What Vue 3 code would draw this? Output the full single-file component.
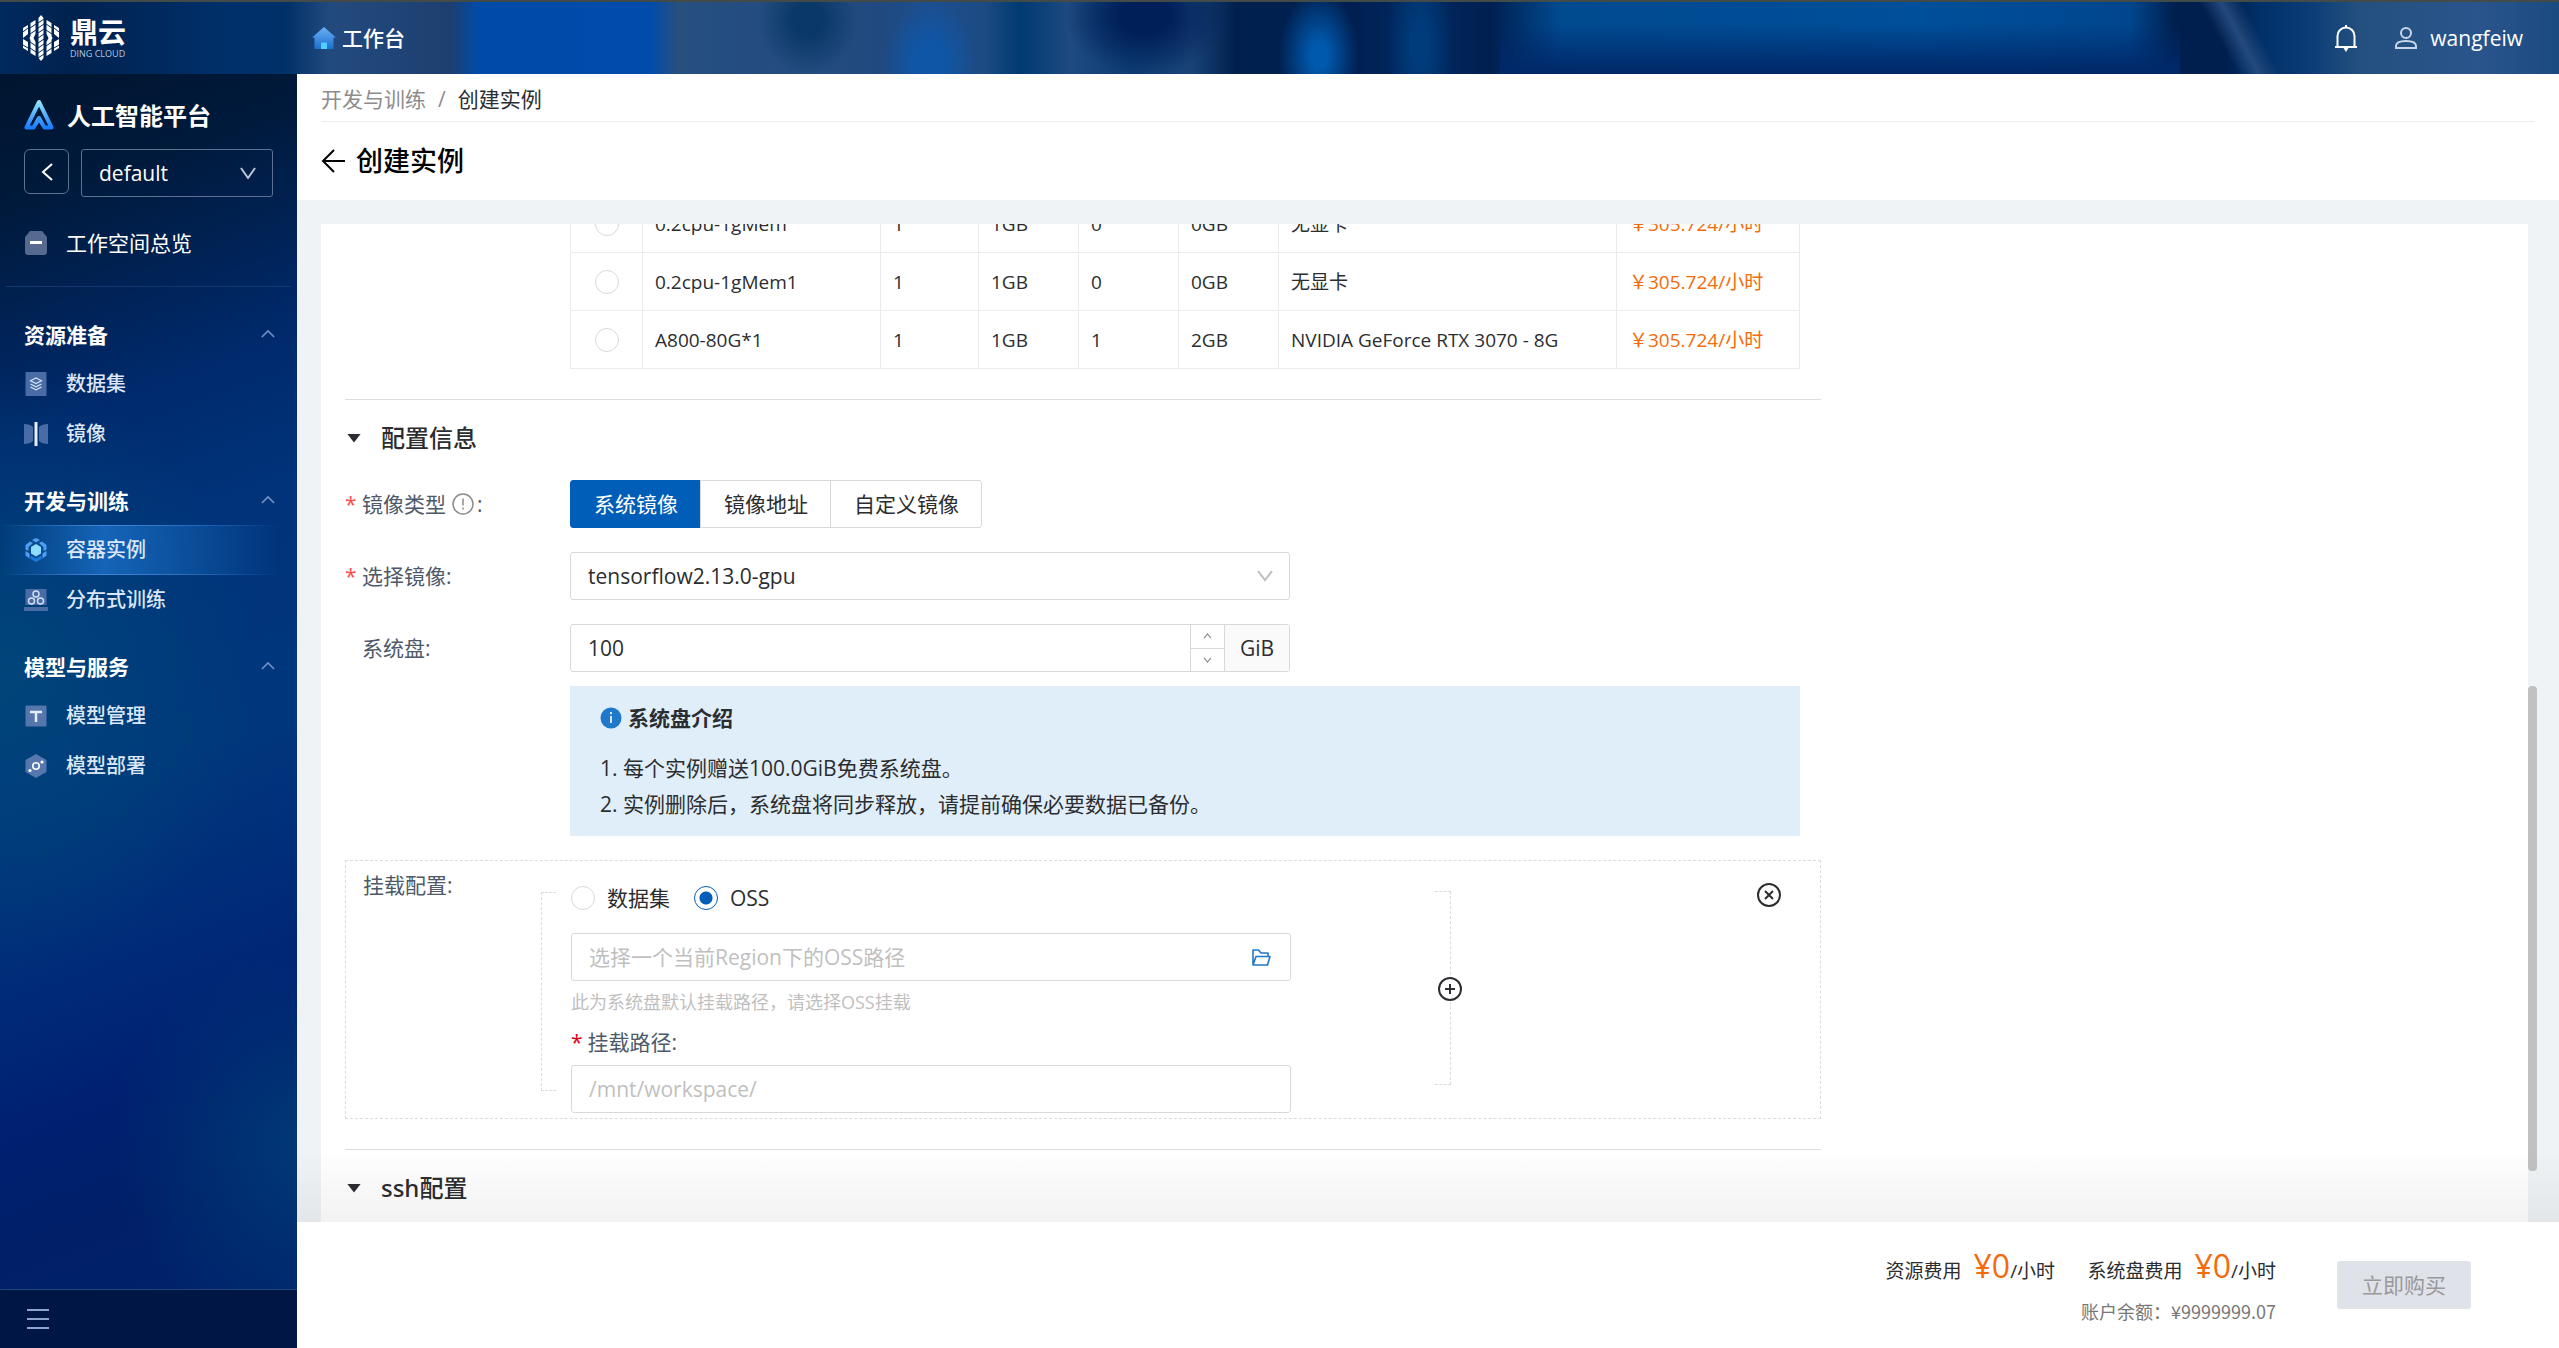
<template>
  <div class="app">
    <header class="topbar">
      <a class="brand" href="#">
        <svg class="brand-mark" viewBox="0 0 36 46" width="36" height="46" aria-hidden="true">
          <g fill="#fff">
            <path d="M0 13l5-3v9l-5 4zM0 24l5 3v9l-5-3zM31 10l5 3v10l-5-4zM31 27l5-3v9l-5 3z" />
            <path d="M7.500 8l5-3v14l-2 4 2 4v14l-5-3v-13l-1-2 1-2zM23.500 5l5 3v13l1 2-1 2v13l-5 3v-14l2-4-2-4z" />
            <path d="M15.500 3L18 0l2.500 3v40L18 46l-2.500-3z" />
          </g>
          <path
            d="M0 17l5-4M0 30l5 3M7 13l6-4M7 19l6-4M7 27l6 4M7 33l6 4M15 8l6-4M15 13l6-4M15 18l6-4M15 23l6-4M15 28l6-4M15 33l6-4M15 38l6-4M15 43l6-4M23 9l6 4M23 15l6 4M23 31l6-4M23 37l6-4M31 13l5 4M31 33l5-3"
            stroke="#06265a" stroke-width="1" fill="none"
          />
        </svg>
        <span class="brand-text">
          <span class="brand-name">鼎云</span>
          <span class="brand-sub">DING CLOUD</span>
        </span>
      </a>

      <a class="workbench" href="#">
        <svg viewBox="0 0 24 22" width="24" height="22" aria-hidden="true">
          <defs>
            <linearGradient id="home-fill" x1="0" y1="0" x2="0" y2="1">
              <stop offset="0" stop-color="#6bb0f5" />
              <stop offset="1" stop-color="#1a6fd0" />
            </linearGradient>
          </defs>
          <path d="M12 0l12 10.500h-2.500V22h-19V10.500H0z" fill="url(#home-fill)" />
          <path d="M9 22v-5.500a1 1 0 0 1 1-1h4a1 1 0 0 1 1 1V22z" fill="#4fd0ff" />
        </svg>
        工作台
      </a>

      <div class="topbar-right">
        <button class="icon-btn" type="button" aria-label="通知">
          <svg viewBox="0 0 24 28" width="24" height="28" fill="none" stroke="#fff" stroke-width="2">
            <path d="M12 1v3M3.500 22V12a8.500 8.500 0 0 1 17 0v10M1 23h22" />
            <path d="M9.500 24h5L12 28z" fill="#fff" stroke="none" />
          </svg>
        </button>
        <a class="user" href="#">
          <svg viewBox="0 0 24 24" width="24" height="24" fill="none" stroke="#c9d6ea" stroke-width="2">
            <circle cx="12" cy="7" r="5" />
            <path d="M2 22v-2c0-4 4-5 10-5s10 1 10 5v2z" />
          </svg>
          wangfeiw
        </a>
      </div>
    </header>

    <div class="body">
      <aside class="sidebar">
        <div class="platform">
          <svg viewBox="0 0 30 31" width="30" height="31" aria-hidden="true">
            <defs>
              <linearGradient id="logo-fill" x1="0" y1="0" x2="0" y2="1">
                <stop offset="0" stop-color="#8fe3ff" />
                <stop offset="1" stop-color="#1a7dff" />
              </linearGradient>
            </defs>
            <path
              d="M15 3L2.500 28.500H9.500L15 19L20.500 28.500H27.500L15 3z" fill="none"
              stroke="url(#logo-fill)" stroke-width="4" stroke-linejoin="round"
            />
            <path d="M15 17l4 11.500L15 23.500L11 28.500z" fill="#2e93ff" />
          </svg>
          <span>人工智能平台</span>
        </div>

        <div class="workspace">
          <button class="back-btn" type="button" aria-label="返回">
            <svg viewBox="0 0 12 18" width="12" height="18" fill="none" stroke="#fff" stroke-width="2">
              <path d="M11 1L2 9l9 8" />
            </svg>
          </button>
          <div class="select-wrap ws-select">
            <select v-model="workspace" aria-label="工作空间">
              <option value="default">default</option>
            </select>
            <svg class="chevron" viewBox="0 0 16 12" width="16" height="12" fill="none" stroke="#b9c6da" stroke-width="2">
              <path d="M1 1l7 10 7-10" />
            </svg>
          </div>
        </div>

        <a class="overview" href="#">
          <svg viewBox="0 0 24 24" width="24" height="24" aria-hidden="true">
            <path d="M6 0h12l5 6v15a3 3 0 0 1-3 3H4a3 3 0 0 1-3-3V6z" fill="#566a8f" />
            <rect x="6" y="10" width="12" height="3" fill="#fff" />
          </svg>
          工作空间总览
        </a>

        <nav class="nav">
          <section v-for="group in menu" :key="group.title" class="nav-group">
            <button class="nav-title" type="button">
              {{ group.title }}
              <svg viewBox="0 0 16 10" width="14" height="9" fill="none" stroke="#6f8fc4" stroke-width="2">
                <path d="M1 9l7-7 7 7" />
              </svg>
            </button>
            <a
              v-for="item in group.items"
              :key="item.label"
              class="nav-item"
              :class="{ active: item.label === activeItem }"
              href="#"
            >
              <svg viewBox="0 0 24 24" width="24" height="24" aria-hidden="true">
                <g v-if="item.icon === 'dataset'">
                  <rect x="1.500" width="21" height="24" rx="1" fill="#4a6ca6" />
                  <path d="M12 6l5.500 2.800L12 11.600 6.500 8.800zM6.500 12l5.500 2.800 5.500-2.800M6.500 15l5.500 2.800 5.500-2.800" fill="none" stroke="#d5e2f5" stroke-width="1.200" />
                </g>
                <g v-else-if="item.icon === 'image'">
                  <path d="M0 2c4 0 7 1 9 3v14c-2 2-5 3-9 3zM24 2c-4 0-7 1-9 3v14c2 2 5 3 9 3z" fill="#4a6ca6" />
                  <rect x="10.500" width="3" height="24" fill="#e6eefb" />
                </g>
                <g v-else-if="item.icon === 'container'">
                  <path d="M12 0l4 2-4 2.500L8 2zM1.500 7l4.500-3.500 3 1.500-4.500 4v4l-3-1.500zM22.500 7L18 3.500 15 5l4.500 4v4l3-1.500zM1.500 13l4 2.500v5l-4-3zM22.500 13l-4 2.500v5l4-3z" fill="#4f9ff2" />
                  <path d="M12 24l-5.500-3v-3.500l5.500 3 5.500-3V21z" fill="#1d76d8" />
                  <path d="M12 6l5 3v6.500l-5 3-5-3V9z" fill="#8edcff" />
                </g>
                <g v-else-if="item.icon === 'distributed'">
                  <rect x="1.500" y="1" width="21" height="16" fill="#4a6ca6" />
                  <rect y="19" width="24" height="4" fill="#4a6ca6" />
                  <g fill="none" stroke="#d5e2f5" stroke-width="1.400">
                    <circle cx="12" cy="6" r="3" />
                    <circle cx="7.500" cy="13" r="3" />
                    <circle cx="16.500" cy="13" r="3" />
                  </g>
                </g>
                <g v-else-if="item.icon === 'model'">
                  <rect x="1.500" y="1.500" width="21" height="21" rx="1" fill="#5577ad" />
                  <path d="M6 8h12M12 8v10" stroke="#e6eefb" stroke-width="2.500" />
                </g>
                <g v-else>
                  <path d="M12 0l10.500 6v12L12 24 1.500 18V6z" fill="#5577ad" />
                  <circle cx="12" cy="12" r="3.200" fill="none" stroke="#fff" stroke-width="1.600" />
                  <circle cx="18" cy="8" r="1.600" fill="#fff" />
                  <circle cx="6" cy="16.500" r="1.600" fill="#fff" />
                </g>
              </svg>
              {{ item.label }}
            </a>
          </section>
        </nav>

        <div class="collapse">
          <button class="icon-btn" type="button" aria-label="收起菜单">
            <svg viewBox="0 0 22 20" width="22" height="20" stroke="#8fa4cc" stroke-width="2">
              <path d="M0 1h22M0 10h22M0 19h22" />
            </svg>
          </button>
        </div>
      </aside>

      <main class="main">
        <div class="page-head">
          <nav class="breadcrumb">
            <a href="#">开发与训练</a>
            <span class="sep">/</span>
            <span>创建实例</span>
          </nav>
          <div class="title-row">
            <button class="icon-btn" type="button" aria-label="返回">
              <svg viewBox="0 0 24 24" width="24" height="24" fill="none" stroke="#000" stroke-width="2">
                <path d="M24 12H2M13 1L2 12l11 11" />
              </svg>
            </button>
            <h1>创建实例</h1>
          </div>
        </div>

        <div class="scroll-area">
          <div class="card">
            <form class="form" @submit.prevent>
              <div class="table-wrap">
                <table class="specs">
                  <colgroup>
                    <col class="c-radio" /><col class="c-name" /><col class="c-cpu" /><col class="c-num" />
                    <col class="c-num" /><col class="c-num" /><col class="c-gpu" /><col />
                  </colgroup>
                  <tbody>
                    <tr v-for="row in specs" :key="row.name">
                      <td class="pick">
                        <input v-model="picked" class="radio" type="radio" name="spec" :value="row.name" :aria-label="row.name" />
                      </td>
                      <td>{{ row.name }}</td>
                      <td>{{ row.cpu }}</td>
                      <td>{{ row.mem }}</td>
                      <td>{{ row.gpus }}</td>
                      <td>{{ row.gpuMem }}</td>
                      <td>{{ row.gpu }}</td>
                      <td class="price">{{ row.price }}</td>
                    </tr>
                  </tbody>
                </table>
              </div>

              <hr />
              <h2 class="section-title"><span class="caret"></span>配置信息</h2>

              <div class="row">
                <span class="label required">
                  镜像类型
                  <svg class="tip" viewBox="0 0 22 22" width="22" height="22" fill="none" stroke="#8c8c8c">
                    <circle cx="11" cy="11" r="10" stroke-width="1.500" />
                    <path d="M11 5.500v7M11 14.500v2" stroke-width="1.500" />
                  </svg>:
                </span>
                <div class="segmented">
                  <button
                    v-for="type in imageTypes"
                    :key="type"
                    type="button"
                    :class="{ on: type === imageType }"
                    @click="imageType = type"
                  >{{ type }}</button>
                </div>
              </div>

              <div class="row">
                <label class="label required" for="image">选择镜像:</label>
                <div class="select-wrap field">
                  <select id="image" v-model="image">
                    <option value="tensorflow2.13.0-gpu">tensorflow2.13.0-gpu</option>
                  </select>
                  <svg class="chevron" viewBox="0 0 16 12" width="16" height="12" fill="none" stroke="#bfbfbf" stroke-width="2">
                    <path d="M1 1l7 9 7-9" />
                  </svg>
                </div>
              </div>

              <div class="row">
                <label class="label" for="disk">系统盘:</label>
                <div class="field number">
                  <input id="disk" v-model.number="disk" type="number" />
                  <div class="steppers">
                    <button type="button" aria-label="增加" @click="disk++">
                      <svg viewBox="0 0 10 7" width="9" height="6" fill="none" stroke="#8c8c8c" stroke-width="1.300"><path d="M1 6l4-5 4 5" /></svg>
                    </button>
                    <button type="button" aria-label="减少" @click="disk--">
                      <svg viewBox="0 0 10 7" width="9" height="6" fill="none" stroke="#8c8c8c" stroke-width="1.300"><path d="M1 1l4 5 4-5" /></svg>
                    </button>
                  </div>
                  <span class="unit">GiB</span>
                </div>
              </div>

              <div class="notice">
                <div class="notice-title">
                  <svg viewBox="0 0 22 22" width="22" height="22" aria-hidden="true">
                    <circle cx="11" cy="11" r="10.500" fill="#1f78c8" />
                    <path d="M11 5v2.200M11 9v7" stroke="#fff" stroke-width="1.600" />
                  </svg>
                  系统盘介绍
                </div>
                <p>1. 每个实例赠送100.0GiB免费系统盘。</p>
                <p>2. 实例删除后，系统盘将同步释放，请提前确保必要数据已备份。</p>
              </div>

              <div class="mount">
                <span class="mount-label">挂载配置:</span>
                <div class="bracket left"></div>
                <div class="mount-body">
                  <div class="radios">
                    <label><input v-model="source" class="radio" type="radio" name="source" value="dataset" />数据集</label>
                    <label><input v-model="source" class="radio" type="radio" name="source" value="oss" />OSS</label>
                  </div>
                  <div class="path-input">
                    <input v-model="ossPath" type="text" aria-label="OSS路径" placeholder="选择一个当前Region下的OSS路径" />
                    <button class="icon-btn" type="button" aria-label="选择路径">
                      <svg viewBox="0 0 19 17" width="19" height="17" fill="none" stroke="#1f78c8" stroke-width="1.600" stroke-linejoin="round">
                        <path d="M1 16V1h5.500l2.500 3h7v3.500M1 16L4 7.500h14L15.500 16z" />
                      </svg>
                    </button>
                  </div>
                  <p class="hint">此为系统盘默认挂载路径，请选择OSS挂载</p>
                  <label class="mount-path-label" for="mount-path"><span>*</span>挂载路径:</label>
                  <div class="path-input">
                    <input id="mount-path" v-model="mountPath" type="text" placeholder="/mnt/workspace/" />
                  </div>
                </div>
                <div class="bracket right">
                  <button class="icon-btn add" type="button" aria-label="添加">
                    <svg viewBox="0 0 24 24" width="24" height="24" fill="none" stroke="#2b2d30" stroke-width="2">
                      <circle cx="12" cy="12" r="11" />
                      <path d="M12 7v10M7 12h10" />
                    </svg>
                  </button>
                </div>
                <button class="icon-btn remove" type="button" aria-label="删除">
                  <svg viewBox="0 0 24 24" width="24" height="24" fill="none" stroke="#2b2d30" stroke-width="2">
                    <circle cx="12" cy="12" r="11" />
                    <path d="M8 8l8 8M16 8l-8 8" />
                  </svg>
                </button>
              </div>

              <hr />
              <h2 class="section-title"><span class="caret"></span>ssh配置</h2>
            </form>
          </div>
          <div class="scrollbar"></div>
        </div>

        <footer class="order-bar">
          <div class="costs">
            <div class="cost">资源费用<strong>¥0</strong>/小时</div>
            <div class="cost">系统盘费用<strong>¥0</strong>/小时</div>
            <div class="balance">账户余额：¥9999999.07</div>
          </div>
          <button class="buy" type="button" disabled>立即购买</button>
        </footer>
      </main>
    </div>
  </div>
</template>

<script setup>
import { ref } from 'vue'

const workspace = ref('default')
const activeItem = ref('容器实例')
const picked = ref('')
const imageType = ref('系统镜像')
const image = ref('tensorflow2.13.0-gpu')
const disk = ref(100)
const source = ref('oss')
const ossPath = ref('')
const mountPath = ref('')

const imageTypes = ['系统镜像', '镜像地址', '自定义镜像']

const menu = [
  {
    title: '资源准备',
    items: [
      { label: '数据集', icon: 'dataset' },
      { label: '镜像', icon: 'image' }
    ]
  },
  {
    title: '开发与训练',
    items: [
      { label: '容器实例', icon: 'container' },
      { label: '分布式训练', icon: 'distributed' }
    ]
  },
  {
    title: '模型与服务',
    items: [
      { label: '模型管理', icon: 'model' },
      { label: '模型部署', icon: 'deploy' }
    ]
  }
]

const specs = [
  { name: '0.2cpu-1gMem', cpu: 1, mem: '1GB', gpus: 0, gpuMem: '0GB', gpu: '无显卡', price: '￥305.724/小时' },
  { name: '0.2cpu-1gMem1', cpu: 1, mem: '1GB', gpus: 0, gpuMem: '0GB', gpu: '无显卡', price: '￥305.724/小时' },
  { name: 'A800-80G*1', cpu: 1, mem: '1GB', gpus: 1, gpuMem: '2GB', gpu: 'NVIDIA GeForce RTX 3070 - 8G', price: '￥305.724/小时' }
]
</script>

<style>
body {
  margin: 0;
}
</style>

<style scoped>
.app {
  height: 100vh;
  display: flex;
  flex-direction: column;
  font-family: 'Open Sans', 'Noto Sans CJK SC', sans-serif;
  font-size: 21px;
  line-height: 32px;
  color: #2b2d30;
  overflow: hidden;
}

.app * {
  box-sizing: border-box;
}

button,
input,
select {
  font: inherit;
  color: inherit;
}

button {
  cursor: pointer;
}

a {
  color: inherit;
  text-decoration: none;
}

p {
  margin: 0;
}

svg {
  display: block;
  flex-shrink: 0;
}

.icon-btn {
  padding: 0;
  border: 0;
  background: none;
  display: flex;
}

/* ── Top bar ── */
.topbar {
  height: 74px;
  flex-shrink: 0;
  display: flex;
  align-items: center;
  border-top: 2px solid #434b49;
  color: #fff;
  background:
    radial-gradient(ellipse 40px 66px at 1319px 54px, #0059ad 20%, transparent 100%),
    radial-gradient(ellipse 34px 90px at 1420px 44px, #003c7c 20%, transparent 100%),
    radial-gradient(ellipse 46px 60px at 930px 60px, #0f56a6 30%, transparent 100%),
    radial-gradient(ellipse 50px 56px at 808px 18px, #0a3868 30%, transparent 100%),
    radial-gradient(ellipse 80px 60px at 1145px 14px, #001f58 30%, transparent 100%),
    linear-gradient(180deg, transparent 30%, #00296a 95%) 1500px 0 / 680px 100% no-repeat,
    linear-gradient(242deg, transparent 38%, #24497d 50%, transparent 62%) 2170px 0 / 140px 100% no-repeat,
    linear-gradient(90deg,
      #002a5e 0, #00224f 70px, #00306a 230px, #003068 285px, #234a7e 330px, #1d3f70 450px,
      #004ba8 478px, #004bac 650px, #27507f 678px, #244c80 740px, #264d80 800px, #20497f 880px,
      #1c4f90 930px, #1d4a82 985px, #003a72 1020px, #1e4a80 1070px, #0c3d74 1130px, #1a4478 1190px,
      #00214f 1235px, #001f50 1350px, #002a62 1420px, #001f50 1490px, #004a90 1560px, #004f9a 1920px,
      #00468e 2130px, #001f4e 2175px, #001f4e 2225px, #003068 2260px, #0b3c76 2310px, #24507f 2360px, #2a558c 2480px, #1a4a80 100%);
}

.brand {
  width: 297px;
  padding-left: 23px;
  display: flex;
  align-items: center;
  gap: 11px;
}

.brand-text {
  display: flex;
  flex-direction: column;
}

.brand-name {
  font-size: 28px;
  font-weight: 700;
  line-height: 32px;
}

.brand-sub {
  font-size: 9px;
  line-height: 12px;
  color: #b9c6da;
}

.workbench {
  margin-left: 15px;
  display: flex;
  align-items: center;
  gap: 6px;
  font-weight: 500;
}

.topbar-right {
  margin-left: auto;
  padding-right: 36px;
  display: flex;
  align-items: center;
  gap: 36px;
}

.user {
  display: flex;
  align-items: center;
  gap: 12px;
}

.body {
  flex: 1;
  min-height: 0;
  display: flex;
}

/* ── Sidebar ── */
.sidebar {
  width: 297px;
  flex-shrink: 0;
  display: flex;
  flex-direction: column;
  color: #fff;
  background:
    radial-gradient(circle 200px at 310px 1070px, #003a76, transparent),
    radial-gradient(ellipse 260px 300px at 0 600px, #00457a, transparent),
    linear-gradient(160deg, #00152f 0, #001a3c 130px, #002a6c 340px, #00337a 480px, #00377c 700px, #002a78 880px, #001f70 1010px, #001f68 1120px, #00266c 1300px);
}

.platform {
  display: flex;
  align-items: center;
  gap: 13px;
  height: 36px;
  margin: 22px 24px 0;
  font-size: 24px;
  font-weight: 700;
}

.platform span {
  padding-top: 4px;
}

.workspace {
  display: flex;
  gap: 12px;
  margin: 17px 24px 0;
}

.back-btn {
  width: 45px;
  height: 45px;
  padding: 0;
  border: 1px solid #5d7191;
  border-radius: 6px;
  background: none;
  display: flex;
  align-items: center;
  justify-content: center;
}

.select-wrap {
  position: relative;
}

.select-wrap select {
  width: 100%;
  height: 48px;
  padding: 0 17px;
  border: 1px solid #d9d9d9;
  border-radius: 3px;
  background: #fff;
  appearance: none;
}

.chevron {
  position: absolute;
  right: 17px;
  top: 18px;
  pointer-events: none;
}

.ws-select {
  flex: 1;
}

.ws-select select {
  border-color: #5d7191;
  background: transparent;
}

.overview {
  display: flex;
  align-items: center;
  gap: 18px;
  height: 50px;
  padding: 0 24px;
  margin: 21px 0 18px;
}

.nav {
  flex: 1;
  margin: 0 6px;
  border-top: 1px solid #12386f;
}

.nav-group {
  padding-top: 24px;
  margin: 0 -6px;
}

.nav-group + .nav-group {
  padding-top: 18px;
}

.nav-title {
  width: 100%;
  height: 48px;
  padding: 0 22px 0 24px;
  border: 0;
  background: none;
  display: flex;
  align-items: center;
  justify-content: space-between;
  font-weight: 700;
}

.nav-title svg {
  margin-bottom: 4px;
}

.nav-item {
  display: flex;
  align-items: center;
  gap: 18px;
  height: 50px;
  padding: 0 24px;
  font-size: 20px;
  font-weight: 500;
  color: #dbe6f7;
}

.nav-item.active {
  background:
    linear-gradient(90deg, transparent, #3f86d8 35%, transparent 94%) top / 100% 1px no-repeat,
    linear-gradient(90deg, transparent, #3f86d8 35%, transparent 94%) bottom / 100% 1px no-repeat,
    linear-gradient(90deg, transparent, #1564b8 35%, transparent 94%);
}

.collapse {
  height: 59px;
  padding-left: 27px;
  display: flex;
  align-items: center;
  border-top: 1px solid #1f4479;
  background: #001745;
}

/* ── Page head ── */
.main {
  flex: 1;
  min-width: 0;
  display: flex;
  flex-direction: column;
  background: #eff3f6;
}

.page-head {
  height: 126px;
  padding: 0 24px;
  background: #fff;
}

.breadcrumb {
  height: 48px;
  padding-top: 2px;
  display: flex;
  align-items: center;
  gap: 12px;
  border-bottom: 1px solid #ebebeb;
}

.breadcrumb a,
.sep {
  color: #8c8c8c;
}

.title-row {
  height: 78px;
  display: flex;
  align-items: center;
  gap: 11px;
}

h1 {
  margin: 0;
  font-size: 27px;
  line-height: 40px;
  font-weight: 500;
  color: #000;
}

/* ── Form card ── */
.scroll-area {
  flex: 1;
  min-height: 0;
  position: relative;
  padding: 24px 31px 0 24px;
  display: flex;
}

.scroll-area::after {
  content: '';
  position: absolute;
  left: 0;
  right: 0;
  bottom: 0;
  height: 75px;
  background: linear-gradient(180deg, transparent, rgba(0, 0, 0, 0.05));
  pointer-events: none;
}

.card {
  flex: 1;
  overflow: hidden;
  background: #fff;
}

.scrollbar {
  position: absolute;
  right: 22px;
  top: 486px;
  bottom: 51px;
  width: 9px;
  border-radius: 4px;
  background: #c1c1c1;
}

.form {
  max-width: 1524px;
  padding: 0 24px;
}

.table-wrap {
  margin-top: -30px;
  padding: 0 21px 30px 225px;
}

.specs {
  width: 100%;
  table-layout: fixed;
  border-collapse: collapse;
  font-size: 19px;
}

.specs td {
  height: 58px;
  padding: 0 12px;
  border: 1px solid #ebebeb;
  white-space: nowrap;
}

.c-radio { width: 72px; }
.c-name { width: 238px; }
.c-cpu { width: 98px; }
.c-num { width: 100px; }
.c-gpu { width: 338px; }

.specs .pick {
  padding: 0;
}

.pick .radio {
  display: block;
  margin: 0 auto;
}

.specs .price {
  color: #f56a0a;
}

.radio {
  width: 24px;
  height: 24px;
  margin: 0;
  border: 1px solid #d9d9d9;
  border-radius: 50%;
  background: #fff;
  appearance: none;
}

.radio:checked {
  border-color: #005eb8;
  background: radial-gradient(circle, #005eb8 6px, #fff 7px);
}

hr {
  height: 1px;
  margin: 0;
  border: 0;
  background: #dedede;
}

.section-title {
  display: flex;
  align-items: center;
  gap: 20px;
  height: 36px;
  margin: 20px 0 24px;
  padding-left: 2px;
  font-family: 'Noto Sans', 'Noto Sans CJK SC', sans-serif;
  font-size: 24px;
  font-weight: 500;
}

.caret {
  width: 14px;
  height: 9px;
  background: #2b2d30;
  clip-path: polygon(0 0, 100% 0, 50% 100%);
}

.row {
  display: flex;
  align-items: center;
  height: 48px;
  margin-bottom: 24px;
}

.label {
  width: 225px;
  padding-left: 17px;
  position: relative;
  display: flex;
  align-items: center;
  color: #4e5969;
}

.label.required::before {
  content: '*';
  position: absolute;
  left: 0;
  color: #ff4d4f;
}

.tip {
  margin: 0 3px 0 6px;
}

.segmented {
  display: flex;
}

.segmented button {
  height: 48px;
  padding: 0 22px 0 23px;
  margin-left: -1px;
  border: 1px solid #d9d9d9;
  background: #fff;
}

.segmented button:first-child {
  margin-left: 0;
  border-radius: 3px 0 0 3px;
}

.segmented button:last-child {
  border-radius: 0 3px 3px 0;
}

.segmented .on {
  border-color: #005eb8;
  background: #005eb8;
  color: #fff;
}

.field {
  flex: 0 1 720px;
}

.number {
  display: flex;
  height: 48px;
  border: 1px solid #d9d9d9;
  border-radius: 3px;
}

.number input {
  flex: 1;
  min-width: 0;
  padding: 0 17px;
  border: 0;
  background: none;
  appearance: textfield;
}

.number input::-webkit-inner-spin-button {
  display: none;
}

.steppers {
  width: 34px;
  display: flex;
  flex-direction: column;
  border-left: 1px solid #d9d9d9;
}

.steppers button {
  flex: 1;
  padding: 0;
  border: 0;
  background: none;
  display: flex;
  align-items: center;
  justify-content: center;
}

.steppers button + button {
  border-top: 1px solid #d9d9d9;
}

.unit {
  width: 65px;
  display: flex;
  align-items: center;
  justify-content: center;
  border-left: 1px solid #d9d9d9;
  background: #fafafa;
}

.notice {
  margin: -10px 21px 24px 225px;
  padding: 14px 30px;
  background: #e0eefa;
  line-height: 36px;
}

.notice-title {
  display: flex;
  align-items: center;
  gap: 6px;
  margin-bottom: 14px;
  font-weight: 700;
}

/* ── Mount box ── */
.mount {
  display: flex;
  margin-bottom: 30px;
  padding: 13px 0 5px;
  border: 1px dashed #dcdcdc;
}

.mount-label {
  width: 195px;
  padding-left: 17px;
  line-height: 22px;
  color: #4e5969;
}

.bracket {
  position: relative;
  border: 1px dashed #dcdcdc;
}

.bracket.left {
  width: 15px;
  margin: 18px 15px 22px 0;
  border-right: 0;
}

.bracket.right {
  width: 16px;
  margin: 17px 0 28px 144px;
  border-left: 0;
}

.add {
  position: absolute;
  right: -12px;
  top: 50%;
  margin-top: -11px;
  border-radius: 50%;
  background: #fff;
}

.remove {
  margin: 9px 39px 0 auto;
  align-self: flex-start;
}

.mount-body {
  flex: 0 1 720px;
}

.radios {
  display: flex;
  gap: 24px;
  height: 48px;
  margin-bottom: 11px;
}

.radios label {
  display: flex;
  align-items: center;
  gap: 12px;
}

.path-input {
  display: flex;
  align-items: center;
  height: 48px;
  padding: 0 19px 0 17px;
  border: 1px solid #d9d9d9;
  border-radius: 3px;
}

.path-input input {
  flex: 1;
  min-width: 0;
  padding: 0;
  border: 0;
  background: none;
}

.path-input input::placeholder {
  color: #bfbfbf;
}

.hint {
  font-size: 18px;
  line-height: 42px;
  color: #bfbfbf;
}

.mount-path-label {
  display: flex;
  gap: 5px;
  margin-bottom: 4px;
  line-height: 38px;
  color: #4e5969;
}

.mount-path-label span {
  color: #d9001b;
}

/* ── Order bar ── */
.order-bar {
  height: 126px;
  flex-shrink: 0;
  display: flex;
  align-items: center;
  justify-content: flex-end;
  gap: 61px;
  padding-right: 88px;
  background: #fff;
}

.costs {
  display: grid;
  grid-template-columns: auto auto;
  column-gap: 26px;
  padding-top: 4px;
}

.cost {
  font-size: 19px;
  line-height: 48px;
  text-align: right;
}

.cost strong {
  margin-left: 12px;
  font-size: 32px;
  font-weight: 400;
  line-height: 32px;
  color: #f56a0a;
}

.balance {
  grid-column: 2;
  font-family: 'Noto Sans CJK SC', sans-serif;
  font-size: 18px;
  line-height: 32px;
  color: #777;
}

.buy {
  height: 48px;
  padding: 0 25px;
  border: 0;
  border-radius: 3px;
  background: #dfe2e9;
  color: #999;
  cursor: not-allowed;
}
</style>
